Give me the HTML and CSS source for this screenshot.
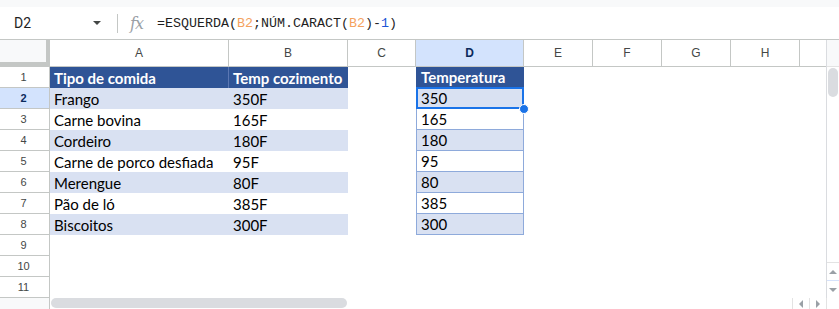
FILE: index.html
```html
<!DOCTYPE html>
<html lang="pt">
<head>
<meta charset="utf-8">
<title>Planilha</title>
<link rel="stylesheet" href="styles.css">
</head>
<body>
<div class="top"></div>
<div class="fbar">
  <div class="namebox"><span class="ref">D2</span><span class="caret"></span></div>
  <div class="sep"></div>
  <div class="fx">fx</div>
  <div class="formula">=ESQUERDA(<span class="o">B2</span>;NÚM.CARACT(<span class="o">B2</span>)-<span class="n">1</span>)</div>
</div>
<div class="sheet">
  <div class="grid">
    <div class="corner"></div>
    <div class="ch">A</div><div class="ch">B</div><div class="ch">C</div><div class="ch sel">D</div><div class="ch">E</div><div class="ch">F</div><div class="ch">G</div><div class="ch">H</div><div class="ch last"></div>

    <div class="rh">1</div><div class="c h sepr">Tipo de comida</div><div class="c h">Temp cozimento</div><div class="c"></div><div class="c h d">Temperatura</div><div class="c"></div><div class="c"></div><div class="c"></div><div class="c"></div><div class="c"></div>

    <div class="rh sel">2</div><div class="c l">Frango</div><div class="c l">350F</div><div class="c"></div><div class="c l d active">350<span class="handle"></span></div><div class="c"></div><div class="c"></div><div class="c"></div><div class="c"></div><div class="c"></div>

    <div class="rh">3</div><div class="c">Carne bovina</div><div class="c">165F</div><div class="c"></div><div class="c d">165</div><div class="c"></div><div class="c"></div><div class="c"></div><div class="c"></div><div class="c"></div>

    <div class="rh">4</div><div class="c l">Cordeiro</div><div class="c l">180F</div><div class="c"></div><div class="c l d">180</div><div class="c"></div><div class="c"></div><div class="c"></div><div class="c"></div><div class="c"></div>

    <div class="rh">5</div><div class="c">Carne de porco desfiada</div><div class="c">95F</div><div class="c"></div><div class="c d">95</div><div class="c"></div><div class="c"></div><div class="c"></div><div class="c"></div><div class="c"></div>

    <div class="rh">6</div><div class="c l">Merengue</div><div class="c l">80F</div><div class="c"></div><div class="c l d">80</div><div class="c"></div><div class="c"></div><div class="c"></div><div class="c"></div><div class="c"></div>

    <div class="rh">7</div><div class="c">Pão de ló</div><div class="c">385F</div><div class="c"></div><div class="c d">385</div><div class="c"></div><div class="c"></div><div class="c"></div><div class="c"></div><div class="c"></div>

    <div class="rh">8</div><div class="c l">Biscoitos</div><div class="c l">300F</div><div class="c"></div><div class="c l d">300</div><div class="c"></div><div class="c"></div><div class="c"></div><div class="c"></div><div class="c"></div>

    <div class="rh">9</div><div class="c"></div><div class="c"></div><div class="c"></div><div class="c"></div><div class="c"></div><div class="c"></div><div class="c"></div><div class="c"></div><div class="c"></div>

    <div class="rh">10</div><div class="c"></div><div class="c"></div><div class="c"></div><div class="c"></div><div class="c"></div><div class="c"></div><div class="c"></div><div class="c"></div><div class="c"></div>

    <div class="rh">11</div><div class="c"></div><div class="c"></div><div class="c"></div><div class="c"></div><div class="c"></div><div class="c"></div><div class="c"></div><div class="c"></div><div class="c"></div>
  </div>
  <div class="vscroll">
    <div class="vs-head"></div>
    <div class="vs-track">
      <div class="vs-thumb"></div>
      <div class="vs-btn vs-up"><span class="tri up"></span></div>
      <div class="vs-btn vs-down"><span class="tri down"></span></div>
    </div>
  </div>
</div>
<div class="bottom">
  <div class="b-left"></div>
  <div class="b-track"><div class="b-thumb"></div></div>
  <div class="b-btn"><span class="tri left"></span></div>
  <div class="b-btn"><span class="tri right"></span></div>
  <div class="b-corner"></div>
</div>
</body>
</html>
```

FILE: styles.css
```css
* { box-sizing: border-box; }
html, body { margin: 0; padding: 0; }
body {
  width: 839px;
  height: 309px;
  overflow: hidden;
  background: #fff;
  font-family: "Liberation Sans", Arial, sans-serif;
}
.top { height: 7px; background: #f8f9fa; }

.fbar {
  height: 33px;
  display: flex;
  align-items: center;
  border-bottom: 1px solid #c4c7c5;
}
.namebox {
  width: 117px;
  height: 100%;
  display: flex;
  align-items: center;
  padding-left: 14px;
}
.ref { font-family: Roboto, sans-serif; font-size: 14px; color: #1f1f1f; }
.caret {
  margin-left: auto;
  margin-right: 16px;
  width: 0; height: 0;
  border-left: 4px solid transparent;
  border-right: 4px solid transparent;
  border-top: 4px solid #444746;
}
.sep { width: 1px; height: 19px; background: #c4c7c5; }
.fx {
  margin-left: 12px;
  width: 17px;
  font-family: "DejaVu Serif", serif;
  font-style: italic;
  font-size: 16px;
  color: #9aa0a6;
  letter-spacing: -1px;
}
.formula {
  margin-left: 10px;
  font-family: "Liberation Mono", monospace;
  font-size: 13.33px;
  color: #1f1f1f;
  white-space: nowrap;
}
.o { color: #f4a25e; }
.n { color: #1d55d6; }

.sheet { display: flex; }
.grid {
  display: grid;
  grid-template-columns: 50px 179px 119px 68px 108px 69px 69px 69px 69px 26px;
  grid-template-rows: 27px repeat(11, 21px);
  width: 826px;
}
.corner {
  background: #f8f9fa;
  border-right: 4px solid #c4c7c5;
  border-bottom: 5px solid #c4c7c5;
}
.ch {
  display: flex;
  align-items: center;
  justify-content: center;
  border-right: 1px solid #c4c7c5;
  border-bottom: 1px solid #c4c7c5;
  font-size: 12px;
  color: #444746;
}
.ch.last { border-right: none; }
.ch.sel { background: #d3e3fd; color: #0b2a5b; font-weight: bold; }
.rh {
  display: flex;
  align-items: center;
  justify-content: center;
  border-right: 1px solid #c4c7c5;
  border-bottom: 1px solid #c4c7c5;
  font-size: 11px;
  color: #444746;
  padding-right: 2px;
}
.rh.sel { background: #d3e3fd; color: #0b2a5b; font-weight: bold; }

.c {
  display: flex;
  align-items: center;
  padding-left: 4px;
  font-family: Lato, "Noto Sans", sans-serif;
  font-size: 15px;
  color: #000;
  white-space: nowrap;
  position: relative;
}
.l { background: #d9e1f2; }
.h { background: #2f5496; color: #fff; font-weight: bold; }
.sepr { border-right: 1px solid #5b77b3; }
.d {
  border-left: 1px solid #8eaadb;
  border-right: 1px solid #8eaadb;
  border-bottom: 1px solid #8eaadb;
  padding-left: 4px;
}
.h.d { border-color: #2f5496; }
.active::after {
  content: "";
  position: absolute;
  left: -1px;
  right: -1px;
  top: -1px;
  bottom: -1px;
  border: 2px solid #1a73e8;
}
.handle {
  position: absolute;
  right: -6px;
  bottom: -6px;
  width: 10px;
  height: 10px;
  border-radius: 50%;
  background: #1a73e8;
  border: 1px solid #fff;
  z-index: 2;
}

.vscroll {
  width: 13px;
  border-left: 1px solid #dadce0;
  display: flex;
  flex-direction: column;
}
.vs-head { height: 27px; background: #f8f9fa; border-bottom: 1px solid #e3e3e3; }
.vs-track {
  flex: 1;
  display: flex;
  flex-direction: column;
  align-items: stretch;
}
.vs-thumb {
  margin: 1px 1px 0 1px;
  height: 29px;
  background: #dadce0;
  border-radius: 5px;
}
.vs-btn {
  height: 18px;
  display: flex;
  align-items: center;
  justify-content: center;
}
.vs-up { margin-top: auto; border-top: 1px solid #e3e3e3; }
.vs-down { border-top: 1px solid #d6e2fb; }

.tri { width: 0; height: 0; display: block; }
.tri.up { border-left: 4px solid transparent; border-right: 4px solid transparent; border-bottom: 4px solid #9aa0a6; }
.tri.down { border-left: 4px solid transparent; border-right: 4px solid transparent; border-top: 4px solid #9aa0a6; }
.tri.left { border-top: 4px solid transparent; border-bottom: 4px solid transparent; border-right: 4px solid #9aa0a6; }
.tri.right { border-top: 4px solid transparent; border-bottom: 4px solid transparent; border-left: 4px solid #9aa0a6; }

.bottom { height: 12px; display: flex; }
.b-left { width: 50px; background: #f8f9fa; border-right: 1px solid #c4c7c5; }
.b-track { flex: 1; padding-left: 1px; }
.b-thumb { width: 296px; height: 10px; background: #dadce0; border-radius: 5px; }
.b-btn {
  width: 17px;
  border-left: 1px solid #e3e3e3;
  display: flex;
  align-items: center;
  justify-content: center;
}
.b-corner { width: 13px; border-left: 1px solid #e3e3e3; }
```
